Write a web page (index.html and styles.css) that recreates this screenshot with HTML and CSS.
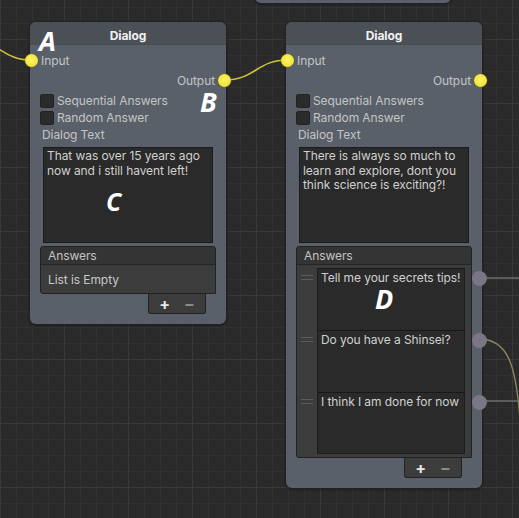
FILE: index.html
```html
<!DOCTYPE html>
<html>
<head>
<meta charset="utf-8">
<link rel="stylesheet" href="styles.css">
</head>
<body>
<div class="canvas">
  <svg class="wires" width="519" height="518" viewBox="0 0 519 518">
    <path class="wire-y" d="M-20 38 C 5 52, 12 60, 31 60"/>
    <path class="wire-y" d="M224 80 C 256 80, 256 60, 288 60"/>
    <path class="wire-g" d="M479 278 L 520 278"/>
    <path class="wire-g2" d="M479 339 C 508 339, 516 365, 520 420"/>
    <path class="wire-g" d="M479 401 L 520 401"/>
  </svg>

  <div class="node node-top"></div>

  <div class="node node-a">
    <div class="node-header">Dialog</div>
    <div class="node-body">
      <div class="port-row in-row"><span class="port port-in yellow"></span>Input</div>
      <div class="port-row out-row">Output<span class="port port-out yellow"></span></div>
      <div class="check-row"><span class="checkbox"></span>Sequential Answers</div>
      <div class="check-row"><span class="checkbox"></span>Random Answer</div>
      <div class="field-label">Dialog Text</div>
      <div class="textarea">That was over 15 years ago now and i still havent left!</div>
      <div class="list">
        <div class="list-header">Answers</div>
        <div class="list-empty">List is Empty</div>
      </div>
      <div class="list-footer"><span class="plus">+</span><span class="minus">−</span></div>
    </div>
  </div>

  <div class="node node-b">
    <div class="node-header">Dialog</div>
    <div class="node-body">
      <div class="port-row in-row"><span class="port port-in yellow"></span>Input</div>
      <div class="port-row out-row">Output<span class="port port-out yellow"></span></div>
      <div class="check-row"><span class="checkbox"></span>Sequential Answers</div>
      <div class="check-row"><span class="checkbox"></span>Random Answer</div>
      <div class="field-label">Dialog Text</div>
      <div class="textarea">There is always so much to learn and explore, dont you think science is exciting?!</div>
      <div class="list">
        <div class="list-header">Answers</div>
        <div class="list-items">
          <div class="item"><span class="handle"></span><div class="item-field">Tell me your secrets tips!</div><span class="port port-item gray"></span></div>
          <div class="item"><span class="handle"></span><div class="item-field">Do you have a Shinsei?</div><span class="port port-item gray"></span></div>
          <div class="item"><span class="handle"></span><div class="item-field">I think I am done for now</div><span class="port port-item gray"></span></div>
        </div>
      </div>
      <div class="list-footer"><span class="plus">+</span><span class="minus">−</span></div>
    </div>
  </div>

  <span class="mark mark-a">A</span>
  <span class="mark mark-b">B</span>
  <span class="mark mark-c">C</span>
  <span class="mark mark-d">D</span>
</div>
</body>
</html>
```

FILE: styles.css
```css
* { box-sizing: border-box; }
html, body {
  margin: 0;
  padding: 0;
  width: 519px;
  height: 518px;
  overflow: hidden;
}
body {
  font-family: "Inter", "Noto Sans", sans-serif;
  font-size: 12px;
  letter-spacing: -0.08px;
  color: #c8c8c8;
}
.canvas {
  position: relative;
  width: 519px;
  height: 518px;
  background-color: #2a2a2a;
  background-image:
    linear-gradient(#393939 1px, transparent 1px),
    linear-gradient(90deg, #393939 1px, transparent 1px),
    linear-gradient(#313131 1px, transparent 1px),
    linear-gradient(90deg, #313131 1px, transparent 1px);
  background-size: 64px 64px, 64px 64px, 16px 16px, 16px 16px;
  background-position: 0 39px, 0 0, 0 7px, 0 0;
  overflow: hidden;
}
.wires {
  position: absolute;
  left: 0;
  top: 0;
  z-index: 0;
}
.wire-y { fill: none; stroke: #cfc23a; stroke-width: 1.6; }
.wire-g { fill: none; stroke: #6e6e6e; stroke-width: 1.3; }
.wire-g2 { fill: none; stroke: #8c875a; stroke-width: 1.3; }

.node {
  position: absolute;
  width: 196px;
  background: #5a6069;
  border-radius: 6px;
  box-shadow: 0 0 0 1px #222, 0 1px 3px rgba(0, 0, 0, 0.6);
  z-index: 1;
}
.node-top { left: 255px; top: -40px; height: 43px; }
.node-a { left: 30px; top: 22px; }
.node-b { left: 286px; top: 22px; }

.node-header {
  height: 23px;
  background: #4b5057;
  border-radius: 6px 6px 0 0;
  border-bottom: 1px solid #464b52;
  text-align: center;
  font-weight: 700;
  color: #f0f0f0;
  line-height: 28px;
  font-size: 12px;
}
.node-body {
  padding: 5px 10px 10px;
  display: flex;
  flex-direction: column;
}
.port-row {
  position: relative;
  height: 20px;
  display: flex;
  align-items: center;
  color: #c4c4c4;
}
.in-row { padding-left: 1px; }
.out-row { justify-content: flex-end; padding-right: 1px; }
.port {
  position: absolute;
  width: 13px;
  height: 13px;
  border-radius: 50%;
  top: 50%;
  margin-top: -6.5px;
}
.yellow {
  background: radial-gradient(circle at 50% 45%, #fbf46a 0%, #f3e63c 60%, #d8cb2c 100%);
  box-shadow: 0 0 0 0.5px rgba(120, 110, 20, 0.6);
}
.gray {
  width: 15px;
  height: 15px;
  background: #7b7685;
}
.port-in { left: -15px; }
.port-out { right: -15px; }

.check-row {
  height: 17px;
  display: flex;
  align-items: center;
  color: #c4c4c4;
  margin-top: 2px;
}
.check-row + .check-row { margin-top: 0; }
.checkbox {
  width: 14px;
  height: 14px;
  background: #2b2b2b;
  border: 1px solid #222;
  border-radius: 2px;
  margin-right: 3px;
}
.field-label {
  height: 18px;
  line-height: 18px;
  padding-left: 2px;
  color: #c4c4c4;
}
.textarea {
  margin: 3px 3px 0;
  height: 96px;
  background: #2a2a2a;
  border: 1px solid #1b1b1b;
  padding: 1px 3px;
  line-height: 14.5px;
  color: #d0d0d0;
}
.list {
  margin-top: 3px;
  background: #3c3c3c;
  border: 1px solid #222;
  border-radius: 3px 3px 0 3px;
  display: flex;
  flex-direction: column;
}
.list-header {
  height: 18px;
  line-height: 18px;
  padding-left: 7px;
  background: #343434;
  border-bottom: 1px solid #242424;
  border-radius: 3px 3px 0 0;
  color: #c4c4c4;
}
.list-empty {
  height: 28px;
  line-height: 30px;
  padding-left: 7px;
  color: #c8c8c8;
}
.list-items {
  padding: 3px 6px 3px 20px;
  display: flex;
  flex-direction: column;
}
.item {
  position: relative;
  height: 62px;
  display: flex;
}
.handle {
  position: absolute;
  left: -16px;
  top: 7px;
  width: 12px;
  height: 5px;
  border-top: 1px solid #5c5c5c;
  border-bottom: 1px solid #5c5c5c;
}
.item-field {
  flex: 1;
  background: #2a2a2a;
  border-top: 1px solid #181818;
  border-left: 1px solid #1d1d1d;
  border-right: 1px solid #1d1d1d;
  padding: 1px 3px;
  color: #d0d0d0;
  line-height: 15px;
  white-space: nowrap;
  overflow: hidden;
}
.item:last-child .item-field { border-bottom: 1px solid #1d1d1d; }
.port-item {
  right: -21.5px;
  top: 3px;
  margin-top: 0;
}
.list-footer {
  align-self: flex-end;
  margin-right: 10px;
  width: 58px;
  height: 20px;
  background: #3c3c3c;
  border: 1px solid #222;
  border-top: none;
  border-radius: 0 0 3px 3px;
  display: flex;
  justify-content: center;
  gap: 14px;
  align-items: center;
  font-size: 16px;
  line-height: 1;
}
.plus { color: #e8e8e8; font-weight: 700; }
.minus { color: #8a8a8a; font-weight: 700; }

.mark {
  position: absolute;
  z-index: 3;
  font-family: "Open Sans", sans-serif;
  font-weight: 700;
  font-style: italic;
  font-size: 27px;
  letter-spacing: 0;
  color: #ffffff;
  line-height: 1;
}
.mark-a { left: 39px; top: 27px; }
.mark-b { left: 200px; top: 88px; }
.mark-c { left: 106px; top: 189px; font-size: 25px; }
.mark-d { left: 375px; top: 285px; }
```
